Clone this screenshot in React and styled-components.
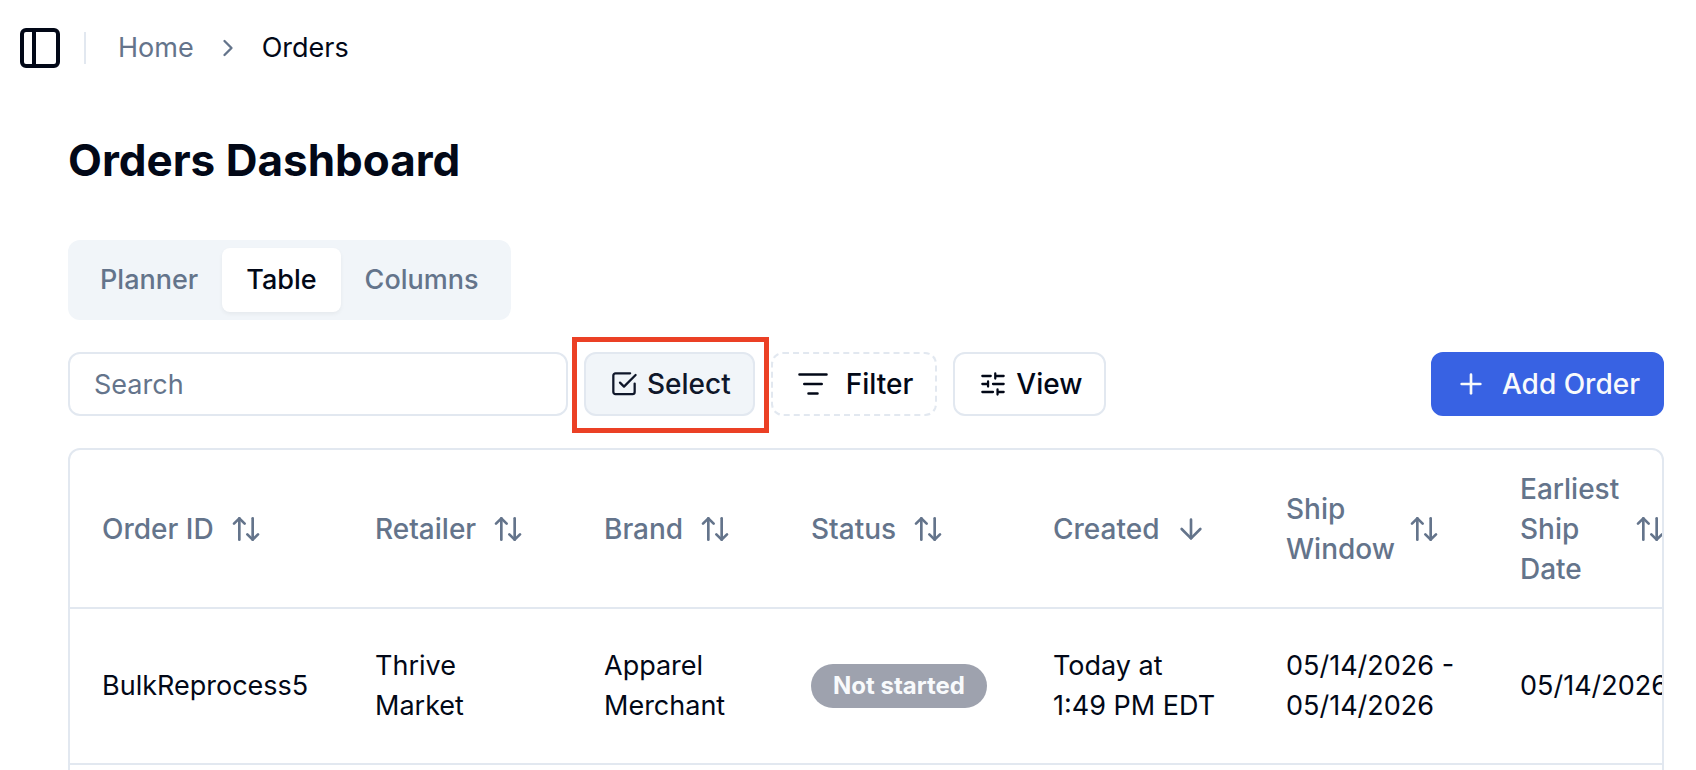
import styled, { createGlobalStyle } from "styled-components";
import {
  ArrowDown,
  ArrowUpDown,
  ChevronRight,
  PanelLeft,
  Plus,
} from "lucide-react";

const GlobalStyle = createGlobalStyle`
  * {
    box-sizing: border-box;
  }

  body {
    margin: 0;
    overflow: hidden;
    background: #ffffff;
    color: #020817;
    font-family: Inter, "Liberation Sans", sans-serif;
    font-size: 27px;
    line-height: 40px;
  }

  button,
  input {
    margin: 0;
    font: inherit;
    color: inherit;
  }

  svg {
    flex-shrink: 0;
  }
`;

const TopBar = styled.header`
  display: flex;
  align-items: center;
  height: 96px;
  padding: 0 16px;
`;

const IconButton = styled.button`
  display: flex;
  padding: 0;
  border: 0;
  background: none;
`;

const Separator = styled.div`
  width: 2px;
  height: 32px;
  margin: 0 32px 0 20px;
  background: #e2e8f0;
`;

const Breadcrumb = styled.nav`
  display: flex;
  align-items: center;
  gap: 20px;
  color: #64748b;
`;

const Crumb = styled.a`
  color: inherit;
  text-decoration: none;
`;

const CurrentCrumb = styled.span`
  color: #020817;
`;

const Main = styled.main`
  padding: 32px 32px 0 68px;
`;

const Title = styled.h1`
  margin: 0;
  font-size: 44px;
  font-weight: 700;
  line-height: 64px;
`;

const Tabs = styled.div`
  display: inline-flex;
  margin-top: 48px;
  padding: 8px;
  border-radius: 12px;
  background: #f1f5f9;
`;

const Tab = styled.button`
  height: 64px;
  padding: 0 24px;
  border: 0;
  border-radius: 8px;
  background: ${({ $active }) => ($active ? "#ffffff" : "transparent")};
  box-shadow: ${({ $active }) =>
    $active ? "0 2px 4px rgba(0, 0, 0, 0.05)" : "none"};
  color: ${({ $active }) => ($active ? "#020817" : "#64748b")};
  font-weight: 500;
`;

const Toolbar = styled.div`
  display: flex;
  align-items: center;
  gap: 16px;
  margin: 32px 0;
`;

const SearchInput = styled.input`
  width: 500px;
  height: 64px;
  padding: 0 24px;
  border: 2px solid #e2e8f0;
  border-radius: 12px;
  background: #ffffff;

  &::placeholder {
    color: #64748b;
    opacity: 1;
  }
`;

const Button = styled.button`
  display: flex;
  align-items: center;
  gap: ${({ $gap }) => $gap || 7}px;
  height: 64px;
  padding: 0 22px;
  border: 2px solid #e2e8f0;
  border-radius: 12px;
  background: #ffffff;
  font-size: 28px;
  font-weight: 500;
  white-space: nowrap;
`;

const SelectButton = styled(Button)`
  background: #f1f5f9;
  color: #0f172a;
`;

const FilterButton = styled(Button)`
  border-style: dashed;
`;

const AddButton = styled(Button)`
  margin-left: auto;
  border-color: #3862e3;
  background: #3862e3;
  color: #f8fafc;
`;

const Highlight = styled.div`
  position: relative;

  &::after {
    content: "";
    position: absolute;
    inset: -15px -14px -17px -12px;
    border: 5px solid #eb4025;
    pointer-events: none;
  }
`;

const TableFrame = styled.div`
  overflow: hidden;
  border: 2px solid #e2e8f0;
  border-radius: 12px;
`;

const Table = styled.table`
  width: 1680px;
  border-collapse: collapse;
  table-layout: fixed;
`;

const Row = styled.tr`
  border-bottom: 2px solid #e2e8f0;
`;

const HeadCell = styled.th`
  width: ${({ $width }) => $width}px;
  height: 158px;
  padding: 0 0 0 32px;
  color: #64748b;
  font-size: 28px;
  font-weight: 500;
  text-align: left;
`;

const SortButton = styled.button`
  display: flex;
  align-items: center;
  gap: 16px;
  padding: 0;
  border: 0;
  background: none;
  text-align: left;
`;

const SortLabel = styled.span`
  width: ${({ $width }) => ($width ? `${$width}px` : "auto")};
`;

const Cell = styled.td`
  height: 156px;
  padding: 0 32px;
  white-space: pre-line;
`;

const Badge = styled.span`
  display: inline-block;
  padding: 0 22px;
  border-radius: 22px;
  background: #9ea2ae;
  color: #f8fafc;
  font-size: 24px;
  font-weight: 700;
  line-height: 44px;
  white-space: nowrap;
`;

const iconProps = {
  width: 32,
  height: 32,
  viewBox: "0 0 24 24",
  fill: "none",
  stroke: "currentColor",
  strokeLinecap: "round",
  strokeLinejoin: "round",
  "aria-hidden": true,
};

const CheckIcon = () => (
  <svg {...iconProps} strokeWidth="1.7">
    <path d="m9 11 3 3 8.7-8.8" />
    <path d="M20 11.7V18a1.6 1.6 0 0 1-1.6 1.6H5.6A1.6 1.6 0 0 1 4 18V5.6A1.6 1.6 0 0 1 5.6 4h11" />
  </svg>
);

const FilterIcon = () => (
  <svg {...iconProps} width={36} height={36} strokeWidth="1.7">
    <path d="M3 5.7h18M6.2 12h11.6M9 18.3h6" />
  </svg>
);

const SlidersIcon = () => (
  <svg {...iconProps} strokeWidth="1.7">
    <path d="M4 6h6.3M13.7 6H20M13.7 4.1v3.8M4 12h4.3M12 12h8M8.3 10.1v3.8M4 18h8M15.4 18H20M15.4 16.1v3.8" />
  </svg>
);

const tabs = ["Planner", "Table", "Columns"];

const columns = [
  { label: "Order ID", width: 273 },
  { label: "Retailer", width: 229 },
  { label: "Brand", width: 207 },
  { label: "Status", width: 242 },
  { label: "Created", width: 233, sorted: true },
  { label: "Ship Window", width: 234, labelWidth: 106 },
  { label: "Earliest Ship Date", width: 262, labelWidth: 98 },
];

const orders = [
  {
    id: "BulkReprocess5",
    retailer: "Thrive\nMarket",
    brand: "Apparel\nMerchant",
    status: "Not started",
    created: "Today at\n1:49 PM EDT",
    shipWindow: "05/14/2026 -\n05/14/2026",
    earliest: "05/14/2026",
  },
];

function App() {
  return (
    <>
      <GlobalStyle />
      <TopBar>
        <IconButton type="button" aria-label="Toggle sidebar">
          <PanelLeft size={48} />
        </IconButton>
        <Separator />
        <Breadcrumb aria-label="Breadcrumb">
          <Crumb href="#home">Home</Crumb>
          <ChevronRight size={28} />
          <CurrentCrumb aria-current="page">Orders</CurrentCrumb>
        </Breadcrumb>
      </TopBar>

      <Main>
        <Title>Orders Dashboard</Title>

        <Tabs role="tablist">
          {tabs.map((tab) => (
            <Tab
              key={tab}
              type="button"
              role="tab"
              aria-selected={tab === "Table"}
              $active={tab === "Table"}
            >
              {tab}
            </Tab>
          ))}
        </Tabs>

        <Toolbar>
          <SearchInput type="text" placeholder="Search" aria-label="Search" />
          <Highlight>
            <SelectButton type="button">
              <CheckIcon />
              Select
            </SelectButton>
          </Highlight>
          <FilterButton type="button" $gap={15}>
            <FilterIcon />
            Filter
          </FilterButton>
          <Button type="button">
            <SlidersIcon />
            View
          </Button>
          <AddButton type="button" $gap={15}>
            <Plus size={32} />
            Add Order
          </AddButton>
        </Toolbar>

        <TableFrame>
          <Table>
            <thead>
              <Row>
                {columns.map((column) => (
                  <HeadCell key={column.label} $width={column.width}>
                    <SortButton type="button">
                      <SortLabel $width={column.labelWidth}>
                        {column.label}
                      </SortLabel>
                      {column.sorted ? (
                        <ArrowDown size={32} />
                      ) : (
                        <ArrowUpDown size={32} />
                      )}
                    </SortButton>
                  </HeadCell>
                ))}
              </Row>
            </thead>
            <tbody>
              {orders.map((order) => (
                <Row key={order.id}>
                  <Cell>{order.id}</Cell>
                  <Cell>{order.retailer}</Cell>
                  <Cell>{order.brand}</Cell>
                  <Cell>
                    <Badge>{order.status}</Badge>
                  </Cell>
                  <Cell>{order.created}</Cell>
                  <Cell>{order.shipWindow}</Cell>
                  <Cell>{order.earliest}</Cell>
                </Row>
              ))}
              {/* next row, only its top edge is in view */}
              <Row>
                <Cell colSpan={columns.length} />
              </Row>
            </tbody>
          </Table>
        </TableFrame>
      </Main>
    </>
  );
}

export default App;
